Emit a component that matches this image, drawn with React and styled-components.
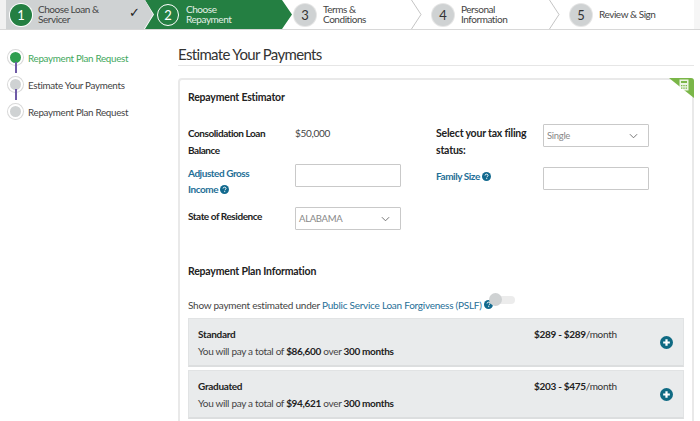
import React from 'react';
import styled, { createGlobalStyle } from 'styled-components';

const GlobalStyle = createGlobalStyle`
  html, body {
    margin: 0;
    padding: 0;
    background: #fff;
    overflow: hidden;
  }
  * {
    box-sizing: border-box;
  }
  body {
    font-family: Lato, Roboto, "Liberation Sans", sans-serif;
    font-size: 10px;
    letter-spacing: -0.3px;
    color: #333;
  }
`;

const steps = [
  { n: 1, label: ['Choose Loan &', 'Servicer'], state: 'done', width: 147 },
  { n: 2, label: ['Choose', 'Repayment'], state: 'active', width: 147 },
  { n: 3, label: ['Terms &', 'Conditions'], state: 'todo', width: 138 },
  { n: 4, label: ['Personal', 'Information'], state: 'todo', width: 138 },
  { n: 5, label: ['Review & Sign'], state: 'last', width: 136 },
];

const subSteps = [
  { label: 'Repayment Plan Request', active: true },
  { label: 'Estimate Your Payments' },
  { label: 'Repayment Plan Request' },
];

const plans = [
  { name: 'Standard', total: '$86,600', months: '300 months', range: '$289 - $289' },
  { name: 'Graduated', total: '$94,621', months: '300 months', range: '$203 - $475' },
];

function Help() {
  return (
    <HelpIcon viewBox="0 0 10 10">
      <circle cx="5" cy="5" r="5" fill="#11698e" />
      <path
        d="M3.4 3.9c0-1 .8-1.5 1.7-1.5s1.6.6 1.6 1.4c0 1.2-1.3 1.1-1.3 2.1"
        fill="none"
        stroke="#fff"
        strokeWidth="1.1"
      />
      <rect x="4.7" y="6.8" width="1.1" height="1.1" fill="#fff" />
    </HelpIcon>
  );
}

function Chevron() {
  return (
    <Caret viewBox="0 0 10 6">
      <path d="M1 1l4 4 4-4" fill="none" stroke="#666" strokeWidth="1" />
    </Caret>
  );
}

function App() {
  return (
    <>
      <GlobalStyle />
      <Stepper>
        {steps.map((s) => (
          <Step key={s.n} $state={s.state} $width={s.width}>
            <Badge $state={s.state}>{s.n}</Badge>
            <StepLabel $state={s.state}>
              {s.label.map((line) => (
                <div key={line}>{line}</div>
              ))}
            </StepLabel>
            {s.state === 'done' && <Check>✓</Check>}
            {s.state === 'todo' && (
              <StepArrow viewBox="0 0 11 29">
                <path d="M0.5 0l9.5 14.5L0.5 29" fill="none" stroke="#b5b5b5" strokeWidth="0.8" />
              </StepArrow>
            )}
          </Step>
        ))}
      </Stepper>
      <Page>
        <Sidebar>
          {subSteps.map((s, i) => (
            <SubStep key={i} $active={s.active} $first={i === 0}>
              <Dot $active={s.active} />
              {s.label}
            </SubStep>
          ))}
        </Sidebar>
        <Main>
          <Title>Estimate Your Payments</Title>
          <Card>
            <Corner viewBox="0 0 25 20">
              <path d="M0 0h22a3 3 0 0 1 3 3v17z" fill="#7ab648" />
              <rect x="10.5" y="1.5" width="9" height="11" fill="#fff" opacity="0.85" />
              <rect x="12" y="3" width="6" height="2" fill="#7ab648" />
              <path d="M12 7h1.4v1.2H12zM14.3 7h1.4v1.2h-1.4zM16.6 7H18v1.2h-1.4zM12 9.6h1.4v1.2H12zM14.3 9.6h1.4v1.2h-1.4zM16.6 9.6H18v1.2h-1.4z" fill="#7ab648" />
            </Corner>
            <CardHeading>Repayment Estimator</CardHeading>
            <FormGrid>
              <FormColumn>
                <Field $height={40}>
                  <Label>Consolidation Loan Balance</Label>
                  <Value>$50,000</Value>
                </Field>
                <Field $height={43}>
                  <Label $link>
                    Adjusted Gross Income <Help />
                  </Label>
                  <TextBox />
                </Field>
                <Field>
                  <Label>State of Residence</Label>
                  <SelectBox>
                    ALABAMA
                    <Chevron />
                  </SelectBox>
                </Field>
              </FormColumn>
              <FormColumn>
                <Field $height={43}>
                  <Label $wide>Select your tax filing status:</Label>
                  <SelectBox>
                    Single
                    <Chevron />
                  </SelectBox>
                </Field>
                <Field>
                  <Label $link>
                    Family Size <Help />
                  </Label>
                  <TextBox />
                </Field>
              </FormColumn>
            </FormGrid>
            <SectionHeading>Repayment Plan Information</SectionHeading>
            <PslfRow>
              Show payment estimated under&nbsp;<PslfLink>Public Service Loan Forgiveness (PSLF)</PslfLink>&nbsp;
              <Help />
              <Toggle />
            </PslfRow>
            <PlanList>
              {plans.map((p) => (
                <Plan key={p.name}>
                  <PlanInfo>
                    <PlanName>{p.name}</PlanName>
                    <PlanTotal>
                      You will pay a total of <strong>{p.total}</strong> over <strong>{p.months}</strong>
                    </PlanTotal>
                  </PlanInfo>
                  <PlanRange>
                    <strong>{p.range}</strong>/month
                  </PlanRange>
                  <PlusIcon viewBox="0 0 14 14">
                    <circle cx="7" cy="7" r="7" fill="#0f6a83" />
                    <path d="M7 3.4v7.2M3.4 7h7.2" stroke="#fff" strokeWidth="2.4" />
                  </PlusIcon>
                </Plan>
              ))}
            </PlanList>
          </Card>
        </Main>
      </Page>
    </>
  );
}

export default App;

const Stepper = styled.div`
  display: flex;
  height: 30px;
  padding-left: 6px;
  background: #fff;
  border-bottom: 1px solid #d8d8d8;
  box-shadow: inset 6px 0 0 #f1f1f1, inset -6px 0 0 #f6f6f6;
  overflow: hidden;
`;

const Step = styled.div`
  position: relative;
  flex: none;
  width: ${(p) => p.$width}px;
  height: 29px;
  display: flex;
  align-items: center;
  padding-left: ${(p) => (p.$state === 'done' ? '4px' : p.$state === 'active' ? '12px' : '10px')};
  margin-right: ${(p) => (p.$state === 'done' || p.$state === 'active' ? '-8px' : '0')};
  background: ${(p) => (p.$state === 'done' ? '#cfd2d3' : p.$state === 'active' ? '#247f42' : 'transparent')};
  clip-path: ${(p) =>
    p.$state === 'done'
      ? 'polygon(0 0, 139px 0, 100% 50%, 138px 100%, 0 100%)'
      : p.$state === 'active'
        ? 'polygon(0 0, 137px 0, 100% 50%, 137px 100%, 0 100%, 9px 50%)'
        : 'none'};
  z-index: ${(p) => (p.$state === 'done' ? 2 : 1)};
`;

const Badge = styled.div`
  flex: none;
  width: 22px;
  height: 22px;
  border-radius: 50%;
  display: flex;
  align-items: center;
  justify-content: center;
  font-size: 13px;
  letter-spacing: 0;
  color: ${(p) => (p.$state === 'done' || p.$state === 'active' ? '#fff' : '#333')};
  background: ${(p) => (p.$state === 'done' ? '#247f42' : p.$state === 'active' ? 'transparent' : '#cfd2d3')};
  border: ${(p) => (p.$state === 'active' ? '1.5px solid #fff' : 'none')};
  box-shadow: ${(p) => (p.$state === 'todo' || p.$state === 'last' ? '0 0 0 1px #e6e6e6' : p.$state === 'done' ? '0 0 0 1px #fff' : 'none')};
`;

const StepLabel = styled.div`
  margin-left: ${(p) => (p.$state === 'done' ? '6px' : '7px')};
  padding-bottom: 2px;
  font-size: 10px;
  letter-spacing: -0.45px;
  line-height: 10px;
  color: ${(p) => (p.$state === 'active' ? '#e3efe6' : '#444')};
`;

const Check = styled.span`
  position: absolute;
  left: 123px;
  top: 5px;
  font-family: "DejaVu Sans", sans-serif;
  font-size: 13px;
  color: #222;
`;

const StepArrow = styled.svg`
  position: absolute;
  right: 0;
  top: 0;
  width: 11px;
  height: 29px;
`;

const Page = styled.div`
  display: flex;
  padding-right: 6px;
`;

const Sidebar = styled.div`
  flex: none;
  width: 178px;
  padding: 14px 0 0 8px;
`;

const SubStep = styled.div`
  position: relative;
  display: flex;
  align-items: center;
  height: 27px;
  color: ${(p) => (p.$active ? '#3fa85c' : '#444')};
  font-size: 9.8px;
  letter-spacing: -0.3px;

  &::before {
    content: '';
    display: ${(p) => (p.$first ? 'none' : 'block')};
    position: absolute;
    left: 7px;
    top: -9px;
    width: 2px;
    height: 11px;
    background: #6f5ba7;
  }
`;

const Dot = styled.span`
  flex: none;
  width: 15px;
  height: 15px;
  margin-right: 5px;
  border-radius: 50%;
  background: ${(p) => (p.$active ? '#2f9e4f' : '#cfd2d3')};
  border: 2px solid #fff;
  box-shadow: 0 0 0 1px #d9d9d9;
`;

const Main = styled.div`
  flex: 1;
  min-width: 0;
`;

const Title = styled.h1`
  margin: 0;
  height: 36px;
  padding-top: 14px;
  font-size: 15px;
  letter-spacing: -0.65px;
  line-height: 20px;
  font-weight: 400;
  color: #333;
  border-bottom: 1px solid #e6e6e6;
`;

const Card = styled.div`
  position: relative;
  margin-top: 12px;
  height: 360px;
  padding: 0 8px;
  border: 2px solid #e9e9e9;
  border-radius: 4px;
`;

const Corner = styled.svg`
  position: absolute;
  top: -2px;
  right: -2px;
  width: 25px;
  height: 20px;
`;

const CardHeading = styled.h2`
  margin: 0;
  padding-top: 9px;
  height: 44px;
  font-size: 10.5px;
  letter-spacing: -0.2px;
  line-height: 16px;
  font-weight: 700;
  color: #222;
`;

const FormGrid = styled.div`
  display: grid;
  grid-template-columns: 248px 1fr;
  height: 139px;
`;

const FormColumn = styled.div`
  display: flex;
  flex-direction: column;
`;

const Field = styled.div`
  display: flex;
  flex: none;
  height: ${(p) => (p.$height ? `${p.$height}px` : 'auto')};
`;

const Label = styled.div`
  flex: none;
  width: 107px;
  padding-right: 14px;
  padding-top: ${(p) => (p.$link ? '0.5px' : '1px')};
  font-size: ${(p) => (p.$wide ? '10.5px' : '10px')};
  letter-spacing: ${(p) => (p.$wide ? '-0.2px' : '-0.45px')};
  line-height: 16.5px;
  font-weight: 700;
  color: ${(p) => (p.$link ? '#1f6f97' : '#222')};
`;

const Value = styled.div`
  padding-top: 1px;
  line-height: 16.5px;
  font-size: 10px;
  color: #444;
`;

const TextBox = styled.input`
  width: 106px;
  height: 23px;
  padding: 0 4px;
  border: 1px solid #c9c9c9;
  border-radius: 1px;
  background: #fff;
`;

const SelectBox = styled.div`
  display: flex;
  align-items: center;
  justify-content: space-between;
  width: 106px;
  height: 23px;
  padding: 0 10px 0 3px;
  border: 1px solid #c9c9c9;
  border-radius: 1px;
  font-size: 9.5px;
  letter-spacing: -0.3px;
  color: #888;
`;

const Caret = styled.svg`
  width: 9px;
  height: 6px;
`;

const HelpIcon = styled.svg`
  display: inline-block;
  vertical-align: -1px;
  width: 9px;
  height: 9px;
`;

const SectionHeading = styled.h2`
  margin: 0;
  height: 33px;
  font-size: 10.5px;
  letter-spacing: -0.2px;
  line-height: 16px;
  font-weight: 700;
  color: #222;
`;

const PslfRow = styled.div`
  position: relative;
  height: 15px;
  display: flex;
  align-items: center;
  margin-bottom: 7px;
  padding-top: 2px;
  font-size: 10px;
  letter-spacing: -0.25px;
  color: #444;
  white-space: nowrap;
`;

const PslfLink = styled.span`
  color: #1f6f97;
`;

const Toggle = styled.span`
  position: absolute;
  left: 301px;
  top: -3px;
  width: 26px;
  height: 13px;

  &::before {
    content: '';
    position: absolute;
    left: 4px;
    right: 0;
    top: 3px;
    height: 8px;
    border-radius: 4px;
    background: #ececec;
  }

  &::after {
    content: '';
    position: absolute;
    left: 0;
    top: 0;
    width: 13px;
    height: 13px;
    border-radius: 50%;
    background: #cfd2d3;
  }
`;

const PlanList = styled.div`
  display: flex;
  flex-direction: column;
  gap: 3px;
`;

const Plan = styled.div`
  display: flex;
  align-items: flex-start;
  height: 49px;
  padding: 7px 10px 0 9px;
  background: #e9ebec;
  border: 1px solid #e1e3e4;
  border-bottom: 2px solid #dcdedf;
`;

const PlanInfo = styled.div`
  flex: none;
  width: 336px;
`;

const PlanName = styled.div`
  font-size: 10px;
  letter-spacing: -0.3px;
  line-height: 17px;
  font-weight: 700;
  color: #222;
`;

const PlanTotal = styled.div`
  font-size: 10px;
  letter-spacing: -0.32px;
  line-height: 17px;
  color: #444;

  strong {
    font-weight: 700;
    color: #222;
  }
`;

const PlanRange = styled.div`
  flex: 1;
  font-size: 10px;
  letter-spacing: -0.3px;
  line-height: 17px;
  color: #333;

  strong {
    font-weight: 700;
    color: #222;
  }
`;

const PlusIcon = styled.svg`
  flex: none;
  width: 13px;
  height: 13px;
  margin-top: 10px;
`;
